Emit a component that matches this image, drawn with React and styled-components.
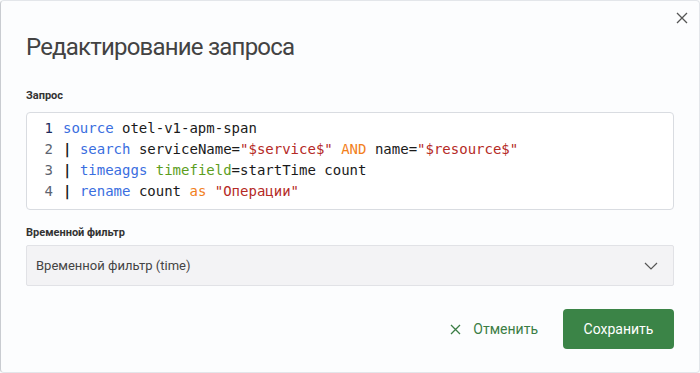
import React from 'react';
import styled, { createGlobalStyle } from 'styled-components';

const GlobalStyle = createGlobalStyle`
  html, body {
    margin: 0;
    padding: 0;
    background: #fbfcfd;
  }
  * { box-sizing: border-box; }
`;

const CODE = [
  [['kw', 'source'], ['tx', ' otel-v1-apm-span']],
  [['pipe', '|'], ['tx', ' '], ['kw', 'search'], ['tx', ' serviceName='], ['str', '"$service$"'], ['tx', ' '], ['op', 'AND'], ['tx', ' name='], ['str', '"$resource$"']],
  [['pipe', '|'], ['tx', ' '], ['kw', 'timeaggs'], ['tx', ' '], ['arg', 'timefield'], ['tx', '=startTime count']],
  [['pipe', '|'], ['tx', ' '], ['kw', 'rename'], ['tx', ' count '], ['op', 'as'], ['tx', ' '], ['str', '"Операции"']],
];

const TOKEN_COLORS = {
  kw: '#3a6ee0',
  tx: '#1a1a1a',
  pipe: '#1a1a1a',
  str: '#b52a26',
  op: '#f2801c',
  arg: '#5d9e1d',
};

const App = () => {
  return (
    <>
      <GlobalStyle />
      <Modal>
        <CloseButton aria-label="close">
          <svg width="12" height="12" viewBox="0 0 12 12">
            <path d="M1 1L11 11M11 1L1 11" stroke="#555" strokeWidth="1.3" />
          </svg>
        </CloseButton>
        <Title>Редактирование запроса</Title>

        <Field>
          <Label>Запрос</Label>
          <CodeBox>
            {CODE.map((line, i) => (
              <CodeLine key={i}>
                <LineNo $active={i === 0}>{i + 1}</LineNo>
                <span>
                  {line.map(([type, text], j) => (
                    <Token key={j} $color={TOKEN_COLORS[type]} $bold={type === 'pipe'}>
                      {text}
                    </Token>
                  ))}
                </span>
              </CodeLine>
            ))}
          </CodeBox>
        </Field>

        <Field>
          <Label>Временной фильтр</Label>
          <Select>
            <span>Временной фильтр (time)</span>
            <svg width="14" height="8" viewBox="0 0 14 8">
              <path d="M1 1L7 7L13 1" stroke="#555" strokeWidth="1.2" fill="none" />
            </svg>
          </Select>
        </Field>

        <Footer>
          <CancelButton>
            <svg width="11" height="11" viewBox="0 0 11 11">
              <path d="M1 1L10 10M10 1L1 10" stroke="#3b7d45" strokeWidth="1.3" />
            </svg>
            Отменить
          </CancelButton>
          <SaveButton>Сохранить</SaveButton>
        </Footer>
      </Modal>
    </>
  );
};

const Modal = styled.div`
  position: relative;
  width: 700px;
  height: 373px;
  background: #fcfdfe;
  border: 1px solid #e3e6ea;
  border-left-color: #c9ccd1;
  border-radius: 4px;
  padding: 29px 25px 0 25px;
  font-family: Roboto, 'Noto Sans', sans-serif;
  display: flex;
  flex-direction: column;
`;

const CloseButton = styled.button`
  position: absolute;
  top: 11px;
  right: 11px;
  width: 12px;
  height: 12px;
  padding: 0;
  border: none;
  background: none;
  display: flex;
`;

const Title = styled.h1`
  margin: 0 0 24px 0;
  font-size: 24px;
  line-height: 34px;
  font-weight: 400;
  color: #434343;
  letter-spacing: -0.8px;
`;

const Field = styled.div`
  display: flex;
  flex-direction: column;
  margin-bottom: 15px;
`;

const Label = styled.div`
  font-size: 11px;
  line-height: 16px;
  font-weight: 700;
  color: #333;
  margin-bottom: 4px;
`;

const CodeBox = styled.div`
  margin-top: 4px;
  border: 1px solid #d9dce1;
  border-radius: 4px;
  background: #fff;
  padding: 5px 0 7px 0;
  font-family: 'DejaVu Sans Mono', monospace;
  font-size: 14px;
`;

const CodeLine = styled.div`
  display: flex;
  line-height: 21px;
  white-space: pre;
`;

const LineNo = styled.span`
  width: 26px;
  text-align: right;
  margin-right: 10px;
  color: ${p => (p.$active ? '#1d2a5c' : '#5c6370')};
`;

const Token = styled.span`
  color: ${p => p.$color};
  font-weight: ${p => (p.$bold ? 700 : 400)};
`;

const Select = styled.div`
  height: 41px;
  background: #f3f3f5;
  border: 1px solid #e1e2e6;
  border-radius: 2px;
  padding: 0 15px 0 9px;
  display: flex;
  align-items: center;
  justify-content: space-between;
  font-size: 13px;
  color: #444;
`;

const Footer = styled.div`
  display: flex;
  justify-content: flex-end;
  align-items: center;
  gap: 25px;
  margin-top: 8px;
`;

const CancelButton = styled.button`
  display: flex;
  align-items: center;
  gap: 12px;
  border: none;
  background: none;
  padding: 0;
  font-family: inherit;
  font-size: 14px;
  color: #3b7d45;
`;

const SaveButton = styled.button`
  width: 111px;
  height: 40px;
  border: none;
  border-radius: 4px;
  background: #3b8447;
  color: #fff;
  font-family: inherit;
  font-size: 14px;
`;

export default App;
